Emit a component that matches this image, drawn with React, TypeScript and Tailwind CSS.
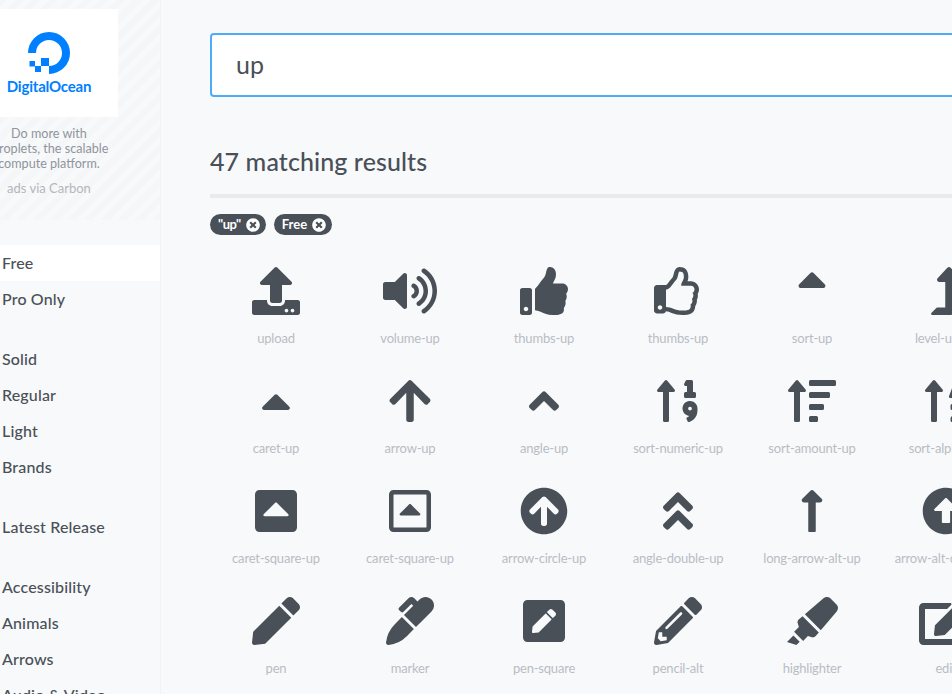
import React from "react";
import type { IconType } from "react-icons";
import {
  FaUpload, FaVolumeUp, FaThumbsUp, FaRegThumbsUp, FaSortUp, FaLevelUpAlt,
  FaCaretUp, FaArrowUp, FaAngleUp, FaSortNumericUp, FaSortAmountUp, FaSortAlphaUp,
  FaCaretSquareUp, FaRegCaretSquareUp, FaArrowCircleUp, FaAngleDoubleUp, FaLongArrowAltUp, FaArrowAltCircleUp,
  FaPen, FaMarker, FaPenSquare, FaPencilAlt, FaHighlighter, FaEdit, FaTimesCircle,
} from "react-icons/fa";

const icons: [IconType, string, string][] = [
  [FaUpload, "upload", "w-12"], [FaVolumeUp, "volume-up", "w-[54px]"], [FaThumbsUp, "thumbs-up", "w-12"], [FaRegThumbsUp, "thumbs-up", "w-12"], [FaSortUp, "sort-up", "w-12"], [FaLevelUpAlt, "level-up-alt", "w-12"],
  [FaCaretUp, "caret-up", "w-12"], [FaArrowUp, "arrow-up", "w-12"], [FaAngleUp, "angle-up", "w-12"], [FaSortNumericUp, "sort-numeric-up", "w-12"], [FaSortAmountUp, "sort-amount-up", "w-[54px]"], [FaSortAlphaUp, "sort-alpha-up", "w-12"],
  [FaCaretSquareUp, "caret-square-up", "w-12"], [FaRegCaretSquareUp, "caret-square-up", "w-12"], [FaArrowCircleUp, "arrow-circle-up", "w-12"], [FaAngleDoubleUp, "angle-double-up", "w-12"], [FaLongArrowAltUp, "long-arrow-alt-up", "w-12"], [FaArrowAltCircleUp, "arrow-alt-circle-up", "w-12"],
  [FaPen, "pen", "w-12"], [FaMarker, "marker", "w-12"], [FaPenSquare, "pen-square", "w-12"], [FaPencilAlt, "pencil-alt", "w-12"], [FaHighlighter, "highlighter", "w-[51px]"], [FaEdit, "edit", "w-[54px]"],
];

const groups: string[][] = [
  ["Free", "Pro Only"],
  ["Solid", "Regular", "Light", "Brands"],
  ["Latest Release"],
  ["Accessibility", "Animals", "Arrows", "Audio & Video"],
];

function DoMark() {
  return (
    <svg viewBox="0 0 42 42" className="h-[42px] w-[42px]">
      <path d="M 4 21 A 17 17 0 1 1 21 38" fill="none" stroke="#0080ff" strokeWidth="8" />
      <rect x="13" y="26" width="8" height="8" fill="#0080ff" />
      <rect x="7" y="34" width="6" height="6" fill="#0080ff" />
      <rect x="1.5" y="29" width="5.5" height="5.5" fill="#0080ff" />
    </svg>
  );
}

function Badge({ label, tight }: { label: string; tight?: boolean }) {
  return (
    <span
      className={
        "flex h-[21px] items-center gap-[5px] rounded-full bg-[#495057] pl-[8px] pr-[6px] text-[13px] font-bold text-white " +
        (tight ? "tracking-[-0.5px]" : "")
      }
    >
      {label}
      <FaTimesCircle className="h-[14px] w-[14px]" />
    </span>
  );
}

export default function App() {
  return (
    <div className="flex h-[694px] w-[952px] overflow-hidden bg-[#f8f9fb] text-[#495057] font-['Lato','Noto_Sans',sans-serif]">
      <aside className="w-[161px] shrink-0 border-r border-[#f1f2f4]">
        <div className="-ml-[62px] flex h-[220px] w-[222px] flex-col items-center bg-[repeating-linear-gradient(-45deg,#f5f6f8_0px,#f5f6f8_6px,#f8f9fb_6px,#f8f9fb_12px)] pt-[9px]">
          <div className="flex h-[108px] w-[138px] flex-col items-center bg-white pt-[23px]">
            <DoMark />
            <span className="mt-[2px] text-[15px] font-bold leading-[20px] tracking-[-0.2px] text-[#0080ff]">DigitalOcean</span>
          </div>
          <p className="mt-[9px] w-[138px] text-center text-[12.6px] leading-[15px] text-[#8f959b]">
            Do more with<br />
            <span className="whitespace-nowrap">Droplets, the scalable</span><br />
            compute platform.
          </p>
          <p className="mt-[10px] text-[13px] leading-[15px] text-[#b3b7bc]">ads via Carbon</p>
        </div>
        <nav className="mt-[25px] flex flex-col gap-[24px]">
          {groups.map((g, i) => (
            <ul key={i} className="flex flex-col">
              {g.map((item) => (
                <li
                  key={item}
                  className={
                    "flex h-[36px] items-center whitespace-nowrap pl-[2px] text-[16px] font-medium tracking-[0.15px] " +
                    (item === "Free" ? "bg-white" : "")
                  }
                >
                  {item}
                </li>
              ))}
            </ul>
          ))}
        </nav>
      </aside>
      <main className="w-[900px] shrink-0 pl-[49px] pt-[33px]">
        <div className="flex h-[64px] items-center rounded-[4px] border-2 border-[#4dabf7] bg-white pl-[24px] text-[25px]">
          up
        </div>
        <h2 className="mt-[47px] text-[25px] font-medium leading-[34px] tracking-[0.1px]">47 matching results</h2>
        <div className="mt-[16px] h-[4px] bg-[#e9eaec]" />
        <div className="mt-[16px] flex gap-[8px]">
          <Badge label={'"up"'} tight />
          <Badge label="Free" />
        </div>
        <div className="-ml-[1px] mt-[32px] grid w-[804px] grid-cols-[repeat(6,134px)] auto-rows-[110px]">
          {icons.map(([Icon, label, w], i) => (
            <div key={i} className="flex flex-col items-center">
              <Icon className={"h-12 text-[#495057] " + w} />
              <span className="mt-[14px] whitespace-nowrap text-[13px] leading-[18px] tracking-[-0.2px] text-[#b8bdc4]">{label}</span>
            </div>
          ))}
        </div>
      </main>
    </div>
  );
}
